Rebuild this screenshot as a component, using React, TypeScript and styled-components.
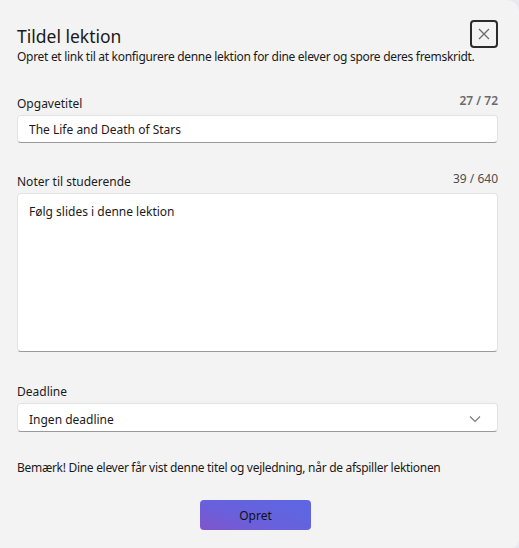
import React, { useState } from "react";
import styled, { createGlobalStyle } from "styled-components";

const GlobalStyle = createGlobalStyle`
  html, body {
    margin: 0;
    padding: 0;
    background: #e9e7f1;
  }
  #root {
    width: 519px;
    height: 548px;
  }
`;

const TITLE_MAX = 72;
const NOTES_MAX = 640;

export default function App() {
  const [title, setTitle] = useState("The Life and Death of Stars");
  const [notes, setNotes] = useState("Følg slides i denne lektion");

  return (
    <>
      <GlobalStyle />
      <Dialog>
        <Header>
          <HeaderText>
            <Title>Tildel lektion</Title>
            <SubTitle>
              Opret et link til at konfigurere denne lektion for dine elever og spore deres fremskridt.
            </SubTitle>
          </HeaderText>
          <CloseButton aria-label="Luk">
            <svg width="12" height="12" viewBox="0 0 12 12">
              <path d="M1 1 L11 11 M11 1 L1 11" stroke="#6b6b6b" strokeWidth="1.3" fill="none" />
            </svg>
          </CloseButton>
        </Header>

        <Field $top={26}>
          <LabelRow>
            <Label>Opgavetitel</Label>
            <Counter>
              {title.length} / {TITLE_MAX}
            </Counter>
          </LabelRow>
          <TextInput value={title} onChange={(e) => setTitle(e.target.value)} />
        </Field>

        <Field $top={27}>
          <LabelRow>
            <Label>Noter til studerende</Label>
            <Counter $light>39 / {NOTES_MAX}</Counter>
          </LabelRow>
          <TextArea value={notes} onChange={(e) => setNotes(e.target.value)} />
        </Field>

        <Field $top={28}>
          <LabelRow>
            <Label>Deadline</Label>
          </LabelRow>
          <Select>
            <span>Ingen deadline</span>
            <svg width="12" height="8" viewBox="0 0 12 8">
              <path d="M1 1.5 L6 6.5 L11 1.5" stroke="#7a7a7a" strokeWidth="1.2" fill="none" />
            </svg>
          </Select>
        </Field>

        <Note>
          Bemærk! Dine elever får vist denne titel og vejledning, når de afspiller lektionen
        </Note>

        <Footer>
          <PrimaryButton>Opret</PrimaryButton>
        </Footer>
      </Dialog>
    </>
  );
}

const Dialog = styled.div`
  box-sizing: border-box;
  width: 519px;
  height: 548px;
  background: #f3f3f3;
  border-radius: 0 12px 8px 0;
  padding: 20px 21px 0 17px;
  font-family: "Segoe UI", "Noto Sans", "Liberation Sans", sans-serif;
  color: #1b1b1b;
  display: flex;
  flex-direction: column;
`;
const Header = styled.div`
  display: flex;
  justify-content: space-between;
  align-items: flex-start;
`;
const HeaderText = styled.div`
  flex: 1;
  min-width: 0;
  padding-top: 4px;
`;
const Title = styled.div`
  font-size: 17.5px;
  line-height: 24px;
  color: #1a1a1a;
`;
const SubTitle = styled.div`
  font-size: 12px;
  line-height: 18px;
  letter-spacing: -0.3px;
  color: #1a1a1a;
  white-space: nowrap;
`;
const CloseButton = styled.button`
  box-sizing: border-box;
  width: 28px;
  height: 28px;
  flex-shrink: 0;
  border: 2px solid #2b2b2b;
  border-radius: 4px;
  background: transparent;
  display: flex;
  align-items: center;
  justify-content: center;
  padding: 0;
  cursor: pointer;
`;
const Field = styled.div<{ $top: number }>`
  margin-top: ${(p) => p.$top}px;
  display: flex;
  flex-direction: column;
`;
const LabelRow = styled.div`
  display: flex;
  justify-content: space-between;
  align-items: flex-end;
  height: 20px;
  margin-bottom: 3px;
`;
const Label = styled.div`
  font-size: 12px;
  line-height: 16px;
`;
const Counter = styled.div<{ $light?: boolean }>`
  font-size: 12px;
  line-height: 16px;
  margin-bottom: 3px;
  color: ${(p) => (p.$light ? "#4e4e4e" : "#6a6a6a")};
  font-weight: ${(p) => (p.$light ? 400 : 600)};
`;
const boxBase = `
  box-sizing: border-box;
  width: 100%;
  background: #ffffff;
  border: 1px solid #e3e3e3;
  border-bottom: 1px solid #9a9a9a;
  border-radius: 4px;
  font-family: "Segoe UI", "Noto Sans", "Liberation Sans", sans-serif;
  font-size: 12px;
  color: #1a1a1a;
  outline: none;
`;
const TextInput = styled.input`
  ${boxBase}
  height: 28px;
  padding: 0 11px;
  color: #2a1616;
`;
const TextArea = styled.textarea`
  ${boxBase}
  height: 159px;
  padding: 9px 11px;
  resize: none;
  line-height: 18px;
`;
const Select = styled.div`
  ${boxBase}
  height: 29px;
  padding: 0 16px 0 11px;
  display: flex;
  align-items: center;
  justify-content: space-between;
  padding-top: 3px;
`;
const Note = styled.div`
  margin-top: 28px;
  font-size: 12px;
  line-height: 16px;
  letter-spacing: -0.3px;
  white-space: nowrap;
`;
const Footer = styled.div`
  margin-top: 24px;
  display: flex;
  justify-content: center;
  padding-right: 4px;
`;
const PrimaryButton = styled.button`
  width: 111px;
  height: 30px;
  border: none;
  border-radius: 4px;
  background: linear-gradient(20deg, #7f55cc 0%, #6861dd 45%, #5b67e2 100%);
  font-family: "Segoe UI", "Noto Sans", "Liberation Sans", sans-serif;
  font-size: 12px;
  color: #111;
  cursor: pointer;
`;
